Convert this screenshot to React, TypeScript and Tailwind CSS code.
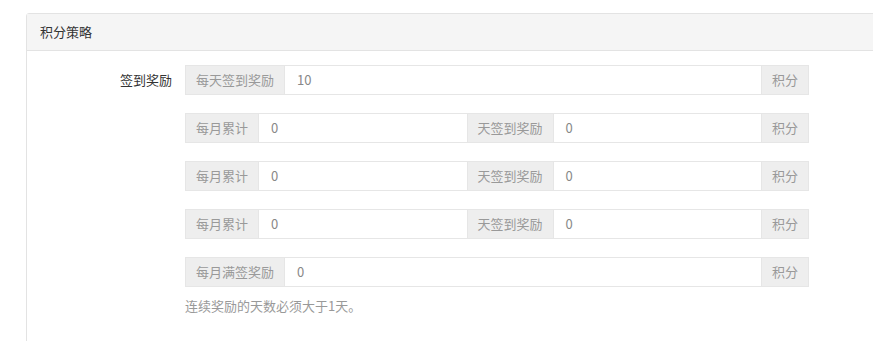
const font = { fontFamily: '"Noto Sans CJK SC", "Noto Sans", sans-serif' };

function Addon({ children }: { children: React.ReactNode }) {
  return (
    <span className="flex h-full shrink-0 items-center border border-[#e6e6e6] bg-[#eeeeee] px-[10px] text-[#999]">
      {children}
    </span>
  );
}

function Field({ value }: { value: string }) {
  return (
    <div className="flex h-full min-w-0 flex-1 items-center border-y border-[#e6e6e6] bg-white px-3 text-[#888]">
      {value}
    </div>
  );
}

function Row({ label, children }: { label?: string; children: React.ReactNode }) {
  return (
    <div className="flex items-center">
      <div className="w-[145px] shrink-0 text-right text-[#333]">{label}</div>
      <div className="ml-[13px] flex h-[30px] w-[624px] items-center">{children}</div>
    </div>
  );
}

export default function App() {
  return (
    <div className="h-[341px] w-[873px] overflow-hidden bg-white text-[13px]" style={font}>
      <div className="ml-[26px] mt-[13px] w-[880px] rounded-tl-[3px] border border-[#e3e3e3]">
        <div className="flex h-[37px] items-center border-b border-[#e3e3e3] bg-[#f5f5f5] pl-[13px] text-[#333]">
          积分策略
        </div>
        <div className="flex h-[300px] flex-col gap-[18px] pt-[14px]">
          <Row label="签到奖励">
            <Addon>每天签到奖励</Addon>
            <Field value="10" />
            <Addon>积分</Addon>
          </Row>
          {[0, 1, 2].map((i) => (
            <Row key={i}>
              <Addon>每月累计</Addon>
              <Field value="0" />
              <Addon>天签到奖励</Addon>
              <Field value="0" />
              <Addon>积分</Addon>
            </Row>
          ))}
          <div>
            <Row>
              <Addon>每月满签奖励</Addon>
              <Field value="0" />
              <Addon>积分</Addon>
            </Row>
            <div className="ml-[158px] mt-[9px] text-[#999]">连续奖励的天数必须大于1天。</div>
          </div>
        </div>
      </div>
    </div>
  );
}
